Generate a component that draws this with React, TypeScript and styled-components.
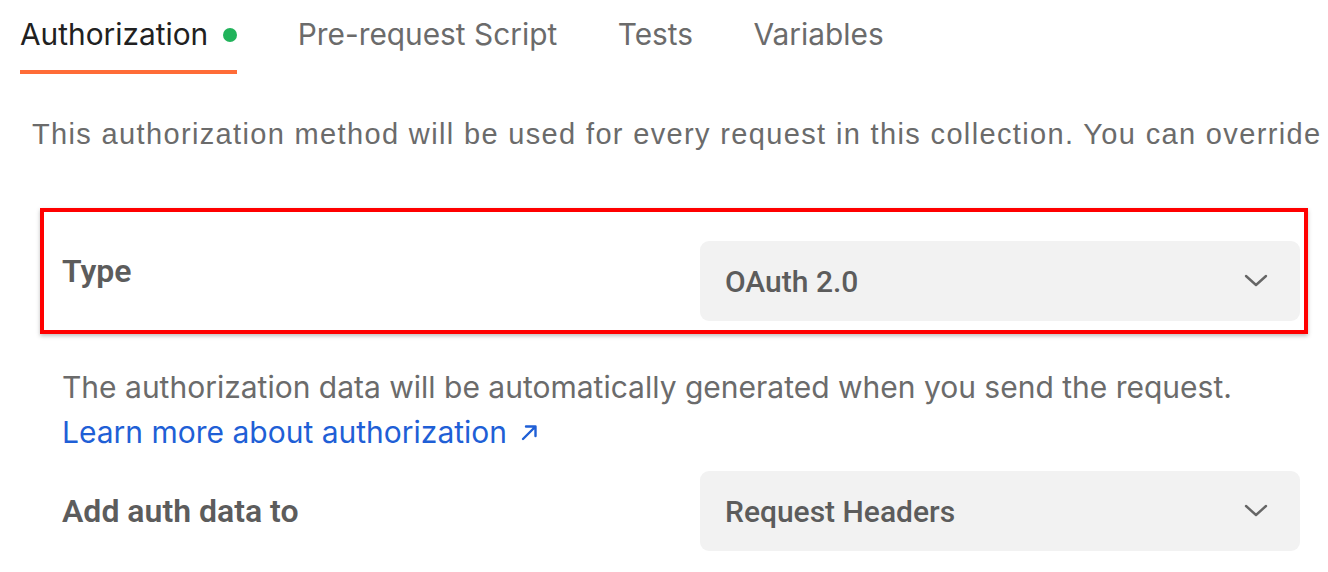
import React from "react";
import styled, { createGlobalStyle } from "styled-components";

const Global = createGlobalStyle`
  html, body { margin: 0; padding: 0; background: #ffffff; }
  body { font-family: Inter, "Noto Sans", sans-serif; }
`;

const Page = styled.div`
  width: 1328px;
  height: 572px;
  overflow: hidden;
  background: #fff;
  box-sizing: border-box;
  padding-left: 20px;
`;

const Tabs = styled.div`
  display: flex;
  gap: 60.5px;
  height: 74px;
  align-items: stretch;
`;

const Tab = styled.div<{ $active?: boolean }>`
  display: flex;
  align-items: center;
  gap: 15px;
  height: 74px;
  box-sizing: border-box;
  padding-top: 2px;
  padding-bottom: 4px;
  font-family: Inter, sans-serif;
  font-size: 29.85px;
  font-weight: 400;
  color: ${(p) => (p.$active ? "#212121" : "#6b6b6b")};
  border-bottom: 4px solid ${(p) => (p.$active ? "#ff6c37" : "transparent")};
`;

const Dot = styled.span`
  width: 14px;
  height: 14px;
  border-radius: 50%;
  background: #21b35b;
  margin-top: 2px;
`;

const Description = styled.p`
  margin: 44px 0 0 12px;
  font-family: "Liberation Sans", Arial, sans-serif;
  font-size: 29px;
  letter-spacing: 1.35px;
  line-height: 32px;
  color: #6b6b6b;
  white-space: nowrap;
`;

const Highlight = styled.div`
  margin: 58px 0 0 20px;
  width: 1268px;
  height: 126px;
  box-sizing: border-box;
  border: 4px solid #ff0000;
  box-shadow: 0 2px 4px rgba(0, 0, 0, 0.25);
  padding: 29px 4px 0 18px;
`;

const Row = styled.div<{ $gap?: number }>`
  display: grid;
  grid-template-columns: 638px 600px;
  align-items: center;
  margin-top: ${(p) => (p.$gap ? `${p.$gap}px` : "0")};
`;

const Label = styled.div<{ $shift?: number }>`
  font-family: Roboto, sans-serif;
  font-size: 32px;
  font-weight: 600;
  color: #5c5c5c;
  margin-top: ${(p) => (p.$shift ? `${p.$shift}px` : "0")};
`;

const Select = styled.div`
  display: flex;
  align-items: center;
  justify-content: space-between;
  height: 80px;
  box-sizing: border-box;
  padding: 0 32px 0 25px;
  background: #f2f2f2;
  border-radius: 9px;
  font-family: Roboto, sans-serif;
  font-size: 30px;
  font-weight: 500;
  color: #5c5c5c;
`;

const Section = styled.div`
  padding-left: 42px;
`;

const Help = styled.p`
  margin: 31px 0 0 0;
  font-family: Inter, sans-serif;
  font-size: 30px;
  line-height: 44px;
  color: #6b6b6b;
  white-space: nowrap;
`;

const LinkLine = styled.a`
  display: flex;
  align-items: center;
  gap: 14px;
  height: 46px;
  font-family: Inter, sans-serif;
  font-size: 30px;
  color: #1f5fd6;
  text-decoration: none;
`;

const Chevron = () => (
  <svg width="24" height="14" viewBox="0 0 24 14" fill="none">
    <path d="M2 2 L12 11 L22 2" stroke="#666" strokeWidth="2.4" strokeLinecap="round" strokeLinejoin="round" />
  </svg>
);

const Arrow = () => (
  <svg width="17" height="17" viewBox="0 0 17 17" fill="none">
    <path d="M2 15 L14.5 2.5 M5 2.5 H14.5 V12" stroke="#1f5fd6" strokeWidth="2.4" strokeLinecap="round" strokeLinejoin="round" />
  </svg>
);

export default function App() {
  return (
    <Page>
      <Global />
      <Tabs>
        <Tab $active>
          Authorization <Dot />
        </Tab>
        <Tab>Pre-request Script</Tab>
        <Tab>Tests</Tab>
        <Tab>Variables</Tab>
      </Tabs>
      <Description>
        This authorization method will be used for every request in this collection. You can override
      </Description>
      <Highlight>
        <Row>
          <Label $shift={-20}>Type</Label>
          <Select>
            OAuth 2.0
            <Chevron />
          </Select>
        </Row>
      </Highlight>
      <Section>
        <Help>The authorization data will be automatically generated when you send the request.</Help>
        <LinkLine href="#">
          Learn more about authorization
          <Arrow />
        </LinkLine>
        <Row $gap={16}>
          <Label>Add auth data to</Label>
          <Select>
            Request Headers
            <Chevron />
          </Select>
        </Row>
      </Section>
    </Page>
  );
}
